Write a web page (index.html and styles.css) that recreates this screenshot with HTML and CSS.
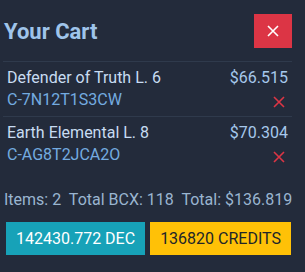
FILE: index.html
```html
<!DOCTYPE html>
<html>
<head>
  <meta charset="utf-8">
  <title>Your Cart</title>
  <link rel="stylesheet" href="styles.css">
</head>
<body>
  <div class="cart">
    <div class="cart-header">
      <div class="cart-title">Your Cart</div>
      <button class="close-btn">
        <svg width="12" height="12" viewBox="0 0 12 12"><path d="M1 1L11 11M11 1L1 11" stroke="#fff" stroke-width="1.6"/></svg>
      </button>
    </div>
    <div class="item">
      <div class="item-info">
        <div class="item-name">Defender of Truth L. 6</div>
        <div class="item-code">C-7N12T1S3CW</div>
      </div>
      <div class="item-side">
        <div class="item-price">$66.515</div>
        <div class="remove">
          <svg width="12" height="12" viewBox="0 0 12 12"><path d="M1 1L11 11M11 1L1 11" stroke="#dc3545" stroke-width="1.6"/></svg>
        </div>
      </div>
    </div>
    <div class="item last">
      <div class="item-info">
        <div class="item-name">Earth Elemental L. 8</div>
        <div class="item-code">C-AG8T2JCA2O</div>
      </div>
      <div class="item-side">
        <div class="item-price">$70.304</div>
        <div class="remove">
          <svg width="12" height="12" viewBox="0 0 12 12"><path d="M1 1L11 11M11 1L1 11" stroke="#dc3545" stroke-width="1.6"/></svg>
        </div>
      </div>
    </div>
    <div class="totals">
      <span>Items: 2</span>
      <span>Total BCX: 118</span>
      <span>Total: $136.819</span>
    </div>
    <div class="pay">
      <button class="btn btn-dec">142430.772 DEC</button>
      <button class="btn btn-credits">136820 CREDITS</button>
    </div>
  </div>
</body>
</html>
```

FILE: styles.css
```css
body {
  margin: 0;
  background-color: #232b3b;
  font-family: Roboto, "Liberation Sans", sans-serif;
  font-size: 16px;
}
.cart {
  width: 289px;
  padding: 14px 0 0 3px;
}
.cart-header {
  display: flex;
  justify-content: space-between;
  align-items: center;
  padding-bottom: 13px;
  border-bottom: 1px solid #2f3a4c;
}
.cart-title {
  color: #9fc4ea;
  font-size: 22px;
  font-weight: bold;
  padding-left: 1px;
}
.close-btn {
  width: 38px;
  height: 34px;
  border: none;
  background-color: #dc3545;
  display: flex;
  align-items: center;
  justify-content: center;
  padding: 0;
}
.item {
  display: flex;
  justify-content: space-between;
  padding: 5px 4px;
  line-height: 22px;
  border-bottom: 1px solid #2f3a4c;
}
.item.last {
  border-bottom: none;
}
.item-name {
  color: #c8dcf2;
}
.item-code {
  color: #74abe0;
}
.item-side {
  text-align: right;
}
.item-price {
  color: #a6c8ec;
}
.remove {
  height: 22px;
  display: flex;
  align-items: center;
  justify-content: flex-end;
  padding-right: 3px;
  padding-top: 3px;
  box-sizing: border-box;
}
.totals {
  margin-top: 18px;
  line-height: 22px;
  color: #9ab5d0;
  padding-left: 1px;
  white-space: nowrap;
}
.totals span {
  margin-right: 4px;
}
.pay {
  display: flex;
  gap: 5px;
  margin-top: 11px;
  padding-left: 3px;
}
.btn {
  border: none;
  font-family: Roboto, "Liberation Sans", sans-serif;
  font-size: 16px;
  line-height: 21px;
  padding: 6px 10px;
  white-space: nowrap;
}
.btn-dec {
  background-color: #17a2b8;
  color: #fff;
}
.btn-credits {
  background-color: #ffc107;
  color: #212529;
}
```
